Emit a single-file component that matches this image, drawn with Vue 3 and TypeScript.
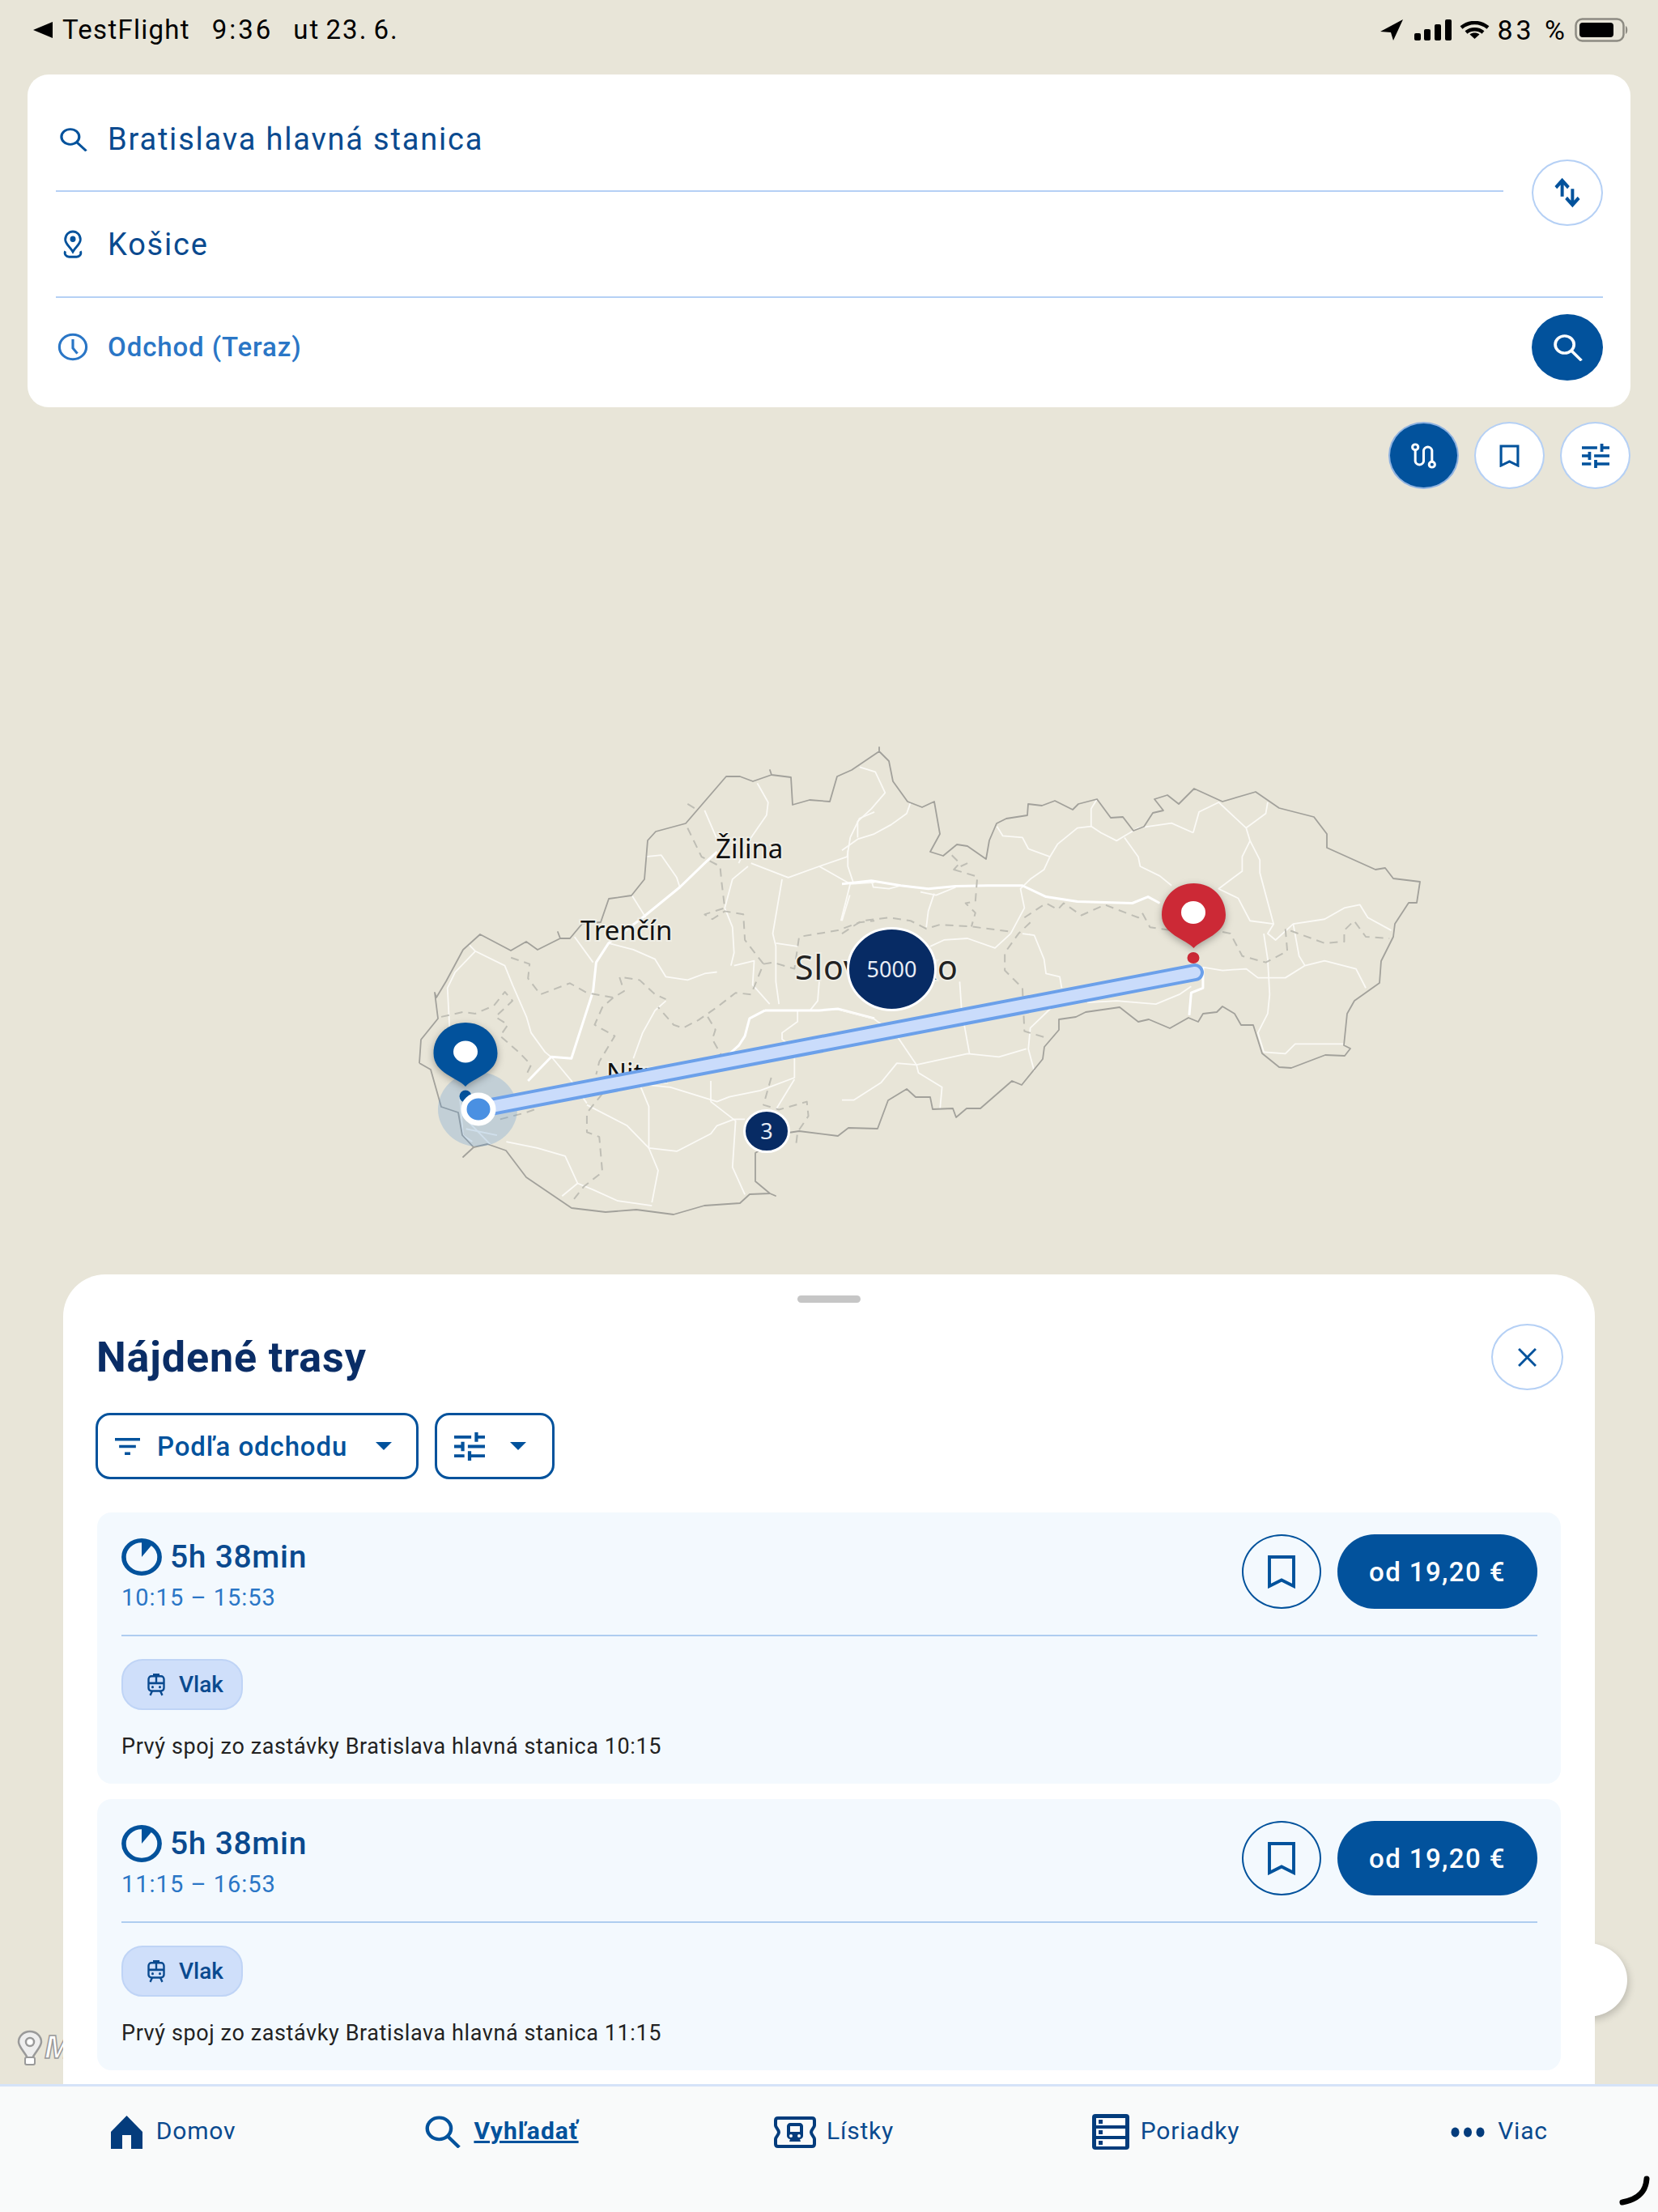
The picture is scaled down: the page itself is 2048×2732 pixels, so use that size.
<script setup lang="ts">
// map geometry is traced from the screenshot, west and east halves in their own grids
const border =
  '518,1313 520,1284 541,1258 537,1226 539,1232 551,1212 572,1173 593,1154 631,1174 650,1163 664,1173 692,1159 689,1151 692,1159 704,1159 719,1141 742,1139 752,1110 780,1106 796,1086 800,1038 810,1027 847,1017 897,959 914,959 930,965 953,957 951,951 953,957 977,960 979,994 1000,988 1025,990 1034,959 1052,951 1086,928 1086,923 1086,928 1098,940 1103,965 1121,990 1139,997 1154,990 1161,1030 1149,1052 1165,1057 1182,1043 1195,1045 1218,1061 1222,1038 1231,1017 1243,1011 1269,1007 1270,993 1287,995 1303,989 1325,1000 1332,993 1355,987 1372,1010 1387,1009 1400,1026 1413,1021 1424,1004 1437,1001 1426,987 1442,982 1456,993 1475,974 1510,990 1551,978 1580,998 1623,1009 1639,1030 1639,1047 1699,1074 1711,1072 1721,1085 1754,1089 1750,1115 1740,1115 1723,1141 1721,1157 1706,1187 1704,1214 1673,1236 1664,1252 1660,1291 1668,1295 1661,1304 1637,1303 1595,1319 1580,1318 1559,1301 1548,1266 1533,1266 1525,1252 1510,1243 1503,1250 1486,1252 1480,1262 1468,1257 1445,1270 1419,1259 1406,1262 1383,1244 1341,1250 1329,1256 1308,1259 1308,1272 1290,1293 1288,1308 1262,1340 1250,1335 1211,1369 1194,1369 1181,1380 1177,1369 1152,1370 1149,1355 1131,1355 1120,1345 1097,1359 1084,1394 1048,1393 1035,1403 987,1397 974,1399 933,1424 933,1459 951,1474 958,1477 951,1474 926,1475 914,1486 870,1489 832,1500 786,1494 748,1497 706,1492 650,1454 625,1421 602,1413 585,1417 572,1429 585,1417 571,1402 566,1374 545,1367 532,1321 518,1313'

const westRoads = [
  '260,675 280,695 375,740 400,800 445,900 460,950 505,1010 530,1030 590,1100 640,1170',
  '280,695 215,760 190,810 195,900 200,1000',
  '600,650 660,730',
  '785,520 830,590',
  '710,670 790,690 860,720 895,775 965,785 1020,765 1060,760',
  '830,400 880,395 930,465 940,495',
  '1170,420 1290,465 1390,430 1490,485 1568,480',
  '1020,255 1060,345',
  '1190,170 1225,230 1220,270 1170,340 1130,420',
  '1160,430 1110,470 1085,560 1110,620 1115,700 1105,740',
  '1270,470 1240,640 1250,680 1250,790 1260,860',
  '1250,670 1320,680',
  '1115,740 1180,725 1175,800 1230,860',
  '1390,430 1480,400 1490,340 1520,280 1568,260',
  '1490,485 1460,600',
  '895,850 860,880 820,950 790,1030',
  '1390,790 1385,850 1360,880',
  '1320,880 1320,915 1270,950 1270,970 1310,1000 1310,1090 1200,1130 1100,1150 1060,1165 910,1120 810,1110 840,1180 840,1310 930,1320 1040,1265 1060,1240 1115,1220 1150,1220',
  '840,1310 870,1380 850,1480',
  '1040,1165 1120,1225 1110,1370 1150,1455',
  '640,1175 770,1240 840,1310',
  '380,1290 480,1310 570,1335 610,1420 660,1440 740,1475 850,1490',
  '610,1420 560,1460',
  '1310,1095 1250,1190',
  '1040,1100 1040,1165',
  '230,1150 240,1270 270,1290',
  '250,1250 350,1270',
  '260,1230 330,1300',
]
const westHighways = [
  '450,1100 525,1025 590,1030 610,970 660,820 670,730 710,670 820,590 940,495 1020,420 1060,385',
  '1215,880 1320,880 1390,880 1450,875 1568,905',
  '1215,880 1165,905 1150,960 1130,990 1095,1020',
]
const westDashes = [
  '395,715 455,735 450,780 490,830 585,795 640,825 725,840 760,820 745,775 810,785 860,830 895,845',
  '725,840 690,870 665,925 730,960 680,1040 670,1080',
  '170,900 240,885 280,890 340,865 375,822 400,850 345,900 385,925 360,960 420,1010 460,1050 440,1090',
  '965,235 990,250',
  '965,310 1010,400 1070,430 1075,480 1085,560 1020,580 1045,595 1085,570 1145,580 1150,660 1210,735 1170,830 1120,825 1060,870 1000,910 950,935 920,925 870,870',
  '1030,900 1055,940 1045,970 1080,1030',
  '1210,735 1240,730 1310,750 1325,650 1450,630 1520,605 1568,600',
  '1235,1090 1210,1175 1260,1190 1350,1165 1355,1210 1320,1260 1315,1300',
  '690,1140 640,1200 640,1260 680,1275 690,1385 630,1430 590,1480',
  '360,1220 440,1200 470,1190',
]

const eastRoads = [
  '75,475 80,495 120,500 150,490',
  '200,510 240,520 290,495',
  '0,380 40,345 80,330 125,300 165,265 175,230',
  '45,120 85,135 110,200 75,250 40,290 40,340',
  '15,380 15,430 30,485',
  '0,600 20,520',
  '235,515 220,570 215,620',
  '225,680 260,660 320,655 390,685 430,640',
  '395,305 410,335 460,340 475,375 530,400 515,440 480,470 455,500 465,560 430,640',
  '530,400 550,360 600,310 635,305 660,325 700,350 720,335 755,310 840,295 895,325',
  '635,305 635,250 650,220',
  '720,340 755,400 760,430 810,460 840,490',
  '895,325 910,260 960,230 1030,310 1040,350 1020,400 1020,445 960,500 1010,530 1040,600 1100,610 1085,640 1105,660 1150,610 1230,595 1280,560 1320,550 1340,590 1400,630',
  '1085,230 1080,265 1030,310',
  '1040,350 1065,410 1065,450 1100,610',
  '1075,640 1085,720 1090,830 1085,890 1060,950 1075,1010',
  '920,745 970,755 1030,750 1060,778 1130,778 1180,740 1230,725 1310,750 1335,810',
  '1150,610 1165,710 1180,740',
  '890,805 860,830 800,860 700,850 625,855',
  '460,640 490,645 515,720 520,765 555,775 560,810',
  '300,790 305,880 325,1015',
  '535,870 480,935 475,1000 490,1070',
  '470,1000 400,1025 320,1015 190,1050 140,1045 100,1105 30,1160 0,1160',
  '190,1050 195,1075 255,1120 250,1185',
  '140,960 190,1050',
  '0,880 80,905 140,960',
  '1075,1010 1130,1015 1155,985 1280,985',
]
const eastHighways = [
  '0,485 75,475 150,490 220,500 290,492 370,490 460,490 520,525 600,540 740,545 780,525 810,545',
  '920,745 920,810 890,825 885,895',
]
const eastDashes = [
  '0,640 50,600 120,590 175,600 215,625 250,612 330,618 435,635',
  '480,605 450,640 415,700 415,755 460,810 465,945 520,965',
  '465,590 520,545 550,565 565,545 610,583 670,550 755,590 765,575 785,620 840,630',
  '280,395 300,420 285,440 320,420',
  '285,440 345,462 340,540 315,545 340,575 330,618',
  '970,635 990,640 1020,710 1080,730 1135,695 1130,625 1230,670 1280,665 1280,630 1305,600 1335,650 1395,655',
]

const routes = [
  { id: 1, time: '10:15 – 15:53', first: 'Prvý spoj zo zastávky Bratislava hlavná stanica 10:15' },
  { id: 2, time: '11:15 – 16:53', first: 'Prvý spoj zo zastávky Bratislava hlavná stanica 11:15' },
]

const tunePath =
  'M3 17v2h6v-2H3zM3 5v2h10V5H3zm10 16v-2h8v-2h-8v-2h-2v6h2zM7 9v2H3v2h4v2h2V9H7zm14 4v-2H11v2h10zm-6-4h2V7h4V5h-4V3h-2v6z'
</script>

<template>
  <div class="screen">
    <!-- map canvas -->
    <svg class="map" viewBox="0 0 2048 2732">
      <g transform="translate(480 900) scale(0.3827 0.3954)">
        <polyline v-for="p in westRoads" :key="p" class="road" :points="p" />
        <polyline v-for="p in westHighways" :key="p" class="road wide" :points="p" />
        <polyline v-for="p in westDashes" :key="p" class="dash" :points="p" />
      </g>
      <g transform="translate(1040 900) scale(0.4847 0.3954)">
        <polyline v-for="p in eastRoads" :key="p" class="road" :points="p" />
        <polyline v-for="p in eastHighways" :key="p" class="road wide" :points="p" />
        <polyline v-for="p in eastDashes" :key="p" class="dash" :points="p" />
      </g>
      <polyline class="border" :points="border" />

      <text class="city" x="884" y="1060">Žilina</text>
      <text class="city" x="717" y="1161">Trenčín</text>
      <text class="city" x="749" y="1337">Nitra</text>
      <text class="city big" x="982" y="1210">Slovensko</text>

      <ellipse cx="590" cy="1370" rx="49" ry="46" fill="#4f8ed0" fill-opacity="0.25" />
      <line x1="591" y1="1370" x2="1476" y2="1201" stroke="#6ba0ea" stroke-width="22" stroke-linecap="round" />
      <line x1="591" y1="1370" x2="1476" y2="1201" stroke="#cadcfb" stroke-width="14" stroke-linecap="round" />

      <ellipse cx="575" cy="1354" rx="7.5" ry="7.5" fill="#02529c" />
      <path class="pin" fill="#02529c" d="M575 1342 C566 1331 535.5 1326 535.5 1301 C535.5 1279 553 1263 575 1263 C597 1263 614.5 1279 614.5 1301 C614.5 1326 584 1331 575 1342Z" />
      <ellipse cx="575" cy="1299" rx="15" ry="13.5" fill="#fff" />
      <ellipse cx="591" cy="1370" rx="18" ry="17" fill="#4a90e2" stroke="#fff" stroke-width="7" />

      <ellipse cx="1474" cy="1183" rx="7.5" ry="7" fill="#cc2936" />
      <path class="pin" fill="#cc2936" d="M1474.5 1171 C1465 1160 1435 1154 1435 1130 C1435 1108 1452 1091 1474.5 1091 C1497 1091 1514 1108 1514 1130 C1514 1154 1484 1160 1474.5 1171Z" />
      <ellipse cx="1474" cy="1127" rx="15" ry="14" fill="#fff" />

      <ellipse cx="1101.5" cy="1197" rx="54" ry="50.5" fill="#072b64" stroke="#fff" stroke-width="3" />
      <text class="count" x="1101.5" y="1207">5000</text>
      <ellipse cx="947" cy="1397" rx="27.5" ry="25.5" fill="#072b64" stroke="#fff" stroke-width="3" />
      <text class="count" x="947" y="1407">3</text>
    </svg>

    <!-- map attribution logo, runs under the sheet -->
    <div class="map-logo">
      <svg width="32" height="44" viewBox="0 0 32 44">
        <path d="M16 2C8 2 2 8 2 15c0 6 8 13 11 20h6c3-7 11-14 11-20 0-7-6-13-14-13z" fill="#eeeeee" stroke="#9a9a9a" stroke-width="2.5" />
        <circle cx="16" cy="15" r="5" fill="#fff" stroke="#9a9a9a" stroke-width="2.5" />
        <rect x="10" y="34" width="12" height="9" rx="2" fill="#fff" stroke="#9a9a9a" stroke-width="2" />
      </svg>
      <span class="logo-m">M</span>
    </div>

    <!-- round button peeking out behind the sheet -->
    <div class="peek"></div>

    <header class="status">
      <div class="status-left">
        <svg width="24" height="20" viewBox="0 0 24 20"><path d="M24 0v20L0 10z" fill="#000" /></svg>
        <span class="sb-app">TestFlight</span>
        <span class="sb-time">9:36</span>
        <span class="sb-date">ut 23. 6.</span>
      </div>
      <div class="status-right">
        <svg width="28" height="26" viewBox="0 0 28 26"><path d="M28 0L0 15l13 1 3 10z" fill="#000" /></svg>
        <svg class="sb-signal" width="46" height="26" viewBox="0 0 46 26">
          <rect x="0" y="17" width="8" height="9" rx="2" />
          <rect x="12" y="12" width="8" height="14" rx="2" />
          <rect x="25" y="6" width="8" height="20" rx="2" />
          <rect x="38" y="0" width="8" height="26" rx="2" />
        </svg>
        <svg class="sb-wifi" width="37" height="22" viewBox="0 0 37 22" fill="none" stroke="#000" stroke-width="4.5">
          <path d="M2 8c10-8 23-8 33 0" />
          <path d="M8 14c6-5 15-5 21 0" />
          <path d="M18.5 22l-6-5.5c3.5-2.6 8.500-2.600 12 0z" fill="#000" stroke="none" />
        </svg>
        <span class="sb-batt-text">83 %</span>
        <svg width="67" height="30" viewBox="0 0 67 30">
          <rect x="1.500" y="1.500" width="59" height="27" rx="8" fill="none" stroke="#8d8b82" stroke-width="2.500" />
          <rect x="6" y="6" width="42" height="18" rx="4" fill="#000" />
          <path d="M63 10c3 1 3 9 0 10z" fill="#8d8b82" />
        </svg>
      </div>
    </header>

    <section class="search-card">
      <div class="field field-from">
        <span class="field-icon">
          <svg width="35" height="30" viewBox="0 0 24 24" preserveAspectRatio="none" fill="none" stroke="#02529c" stroke-width="2.200">
            <circle cx="9.500" cy="9.500" r="7.500" /><path d="M15 15l8 8.500" />
          </svg>
        </span>
        <span class="field-text">Bratislava hlavná stanica</span>
      </div>
      <div class="field field-to">
        <span class="field-icon">
          <svg width="28" height="35" viewBox="0 0 24 28" preserveAspectRatio="none" fill="none" stroke="#02529c" stroke-width="2.400">
            <path d="M12 1.500a8 8 0 0 1 8 8c0 4.500-5 7-8 12-3-5-8-7.500-8-12a8 8 0 0 1 8-8z" />
            <circle cx="12" cy="9" r="1.800" fill="#02529c" />
            <path d="M4 21c-1.500 3 1 5.500 4 5.500h8c3 0 5.500-2.500 4-5.500" />
          </svg>
        </span>
        <span class="field-text">Košice</span>
      </div>
      <div class="field field-when">
        <span class="field-icon">
          <svg width="38" height="35" viewBox="0 0 24 24" preserveAspectRatio="none" fill="none" stroke="#2a76c6" stroke-width="2">
            <circle cx="12" cy="12" r="10.500" /><path d="M12 5.500V13l3.500 4.500" />
          </svg>
        </span>
        <span class="when-text">Odchod (Teraz)</span>
        <button class="round solid go">
          <svg width="37" height="34" viewBox="0 0 24 24" preserveAspectRatio="none" fill="none" stroke="#fff" stroke-width="2.400">
            <circle cx="9.500" cy="9.500" r="7.500" /><path d="M15 15l8 8.500" />
          </svg>
        </button>
      </div>
      <button class="round swap">
        <svg width="34" height="38" viewBox="0 0 24 24" preserveAspectRatio="none" fill="none" stroke="#02529c" stroke-width="2.800">
          <path d="M7.500 15V2.500M2 8l5.500-5.500L13 8M16.500 9v12.500M11 16l5.500 5.500L22 16" />
        </svg>
      </button>
    </section>

    <div class="map-tools">
      <button class="round solid outlined">
        <svg width="33" height="32" viewBox="0 0 24 24" preserveAspectRatio="none" fill="none" stroke="#fff" stroke-width="2.200">
          <circle cx="4.500" cy="4" r="2.600" />
          <path d="M4.500 6.600V17a3.800 3.800 0 0 0 7.500 0V7a3.800 3.800 0 0 1 7.500 0v10.400" />
          <circle cx="19.500" cy="20" r="2.600" />
        </svg>
      </button>
      <button class="round">
        <svg width="25" height="28" viewBox="0 0 24 28" preserveAspectRatio="none" fill="none" stroke="#02529c" stroke-width="3">
          <path d="M2 2h20v24l-10-5-10 5z" />
        </svg>
      </button>
      <button class="round">
        <svg width="34" height="30" viewBox="3 3 18 18" preserveAspectRatio="none" fill="#02529c"><path :d="tunePath" /></svg>
      </button>
    </div>

    <div class="spacer"></div>

    <section class="sheet">
      <div class="handle"></div>
      <div class="sheet-head">
        <h1 class="sheet-title">Nájdené trasy</h1>
        <button class="round close">
          <svg width="25" height="25" viewBox="0 0 24 24" fill="none" stroke="#02529c" stroke-width="2.800">
            <path d="M2 2l20 20M22 2L2 22" />
          </svg>
        </button>
      </div>

      <div class="sort-row">
        <button class="select select-sort">
          <svg width="31" height="21" viewBox="3 6 18 12" preserveAspectRatio="none" fill="#02529c"><path d="M10 18h4v-2h-4v2zM3 6v2h18V6H3zm3 7h12v-2H6v2z" /></svg>
          <span>Podľa odchodu</span>
          <svg class="caret" width="20" height="10" viewBox="7 10 10 5" preserveAspectRatio="none"><path d="M7 10l5 5 5-5z" fill="#02529c" /></svg>
        </button>
        <button class="select select-tune">
          <svg width="38" height="35" viewBox="3 3 18 18" preserveAspectRatio="none" fill="#02529c"><path :d="tunePath" /></svg>
          <svg class="caret" width="20" height="10" viewBox="7 10 10 5" preserveAspectRatio="none"><path d="M7 10l5 5 5-5z" fill="#02529c" /></svg>
        </button>
      </div>

      <article v-for="r in routes" :key="r.id" class="route">
        <div class="route-top">
          <div>
            <div class="duration">
              <svg width="50" height="46" viewBox="0 0 24 24" preserveAspectRatio="none">
                <circle cx="12" cy="12" r="10.600" fill="none" stroke="#02529c" stroke-width="2.700" />
                <path d="M12 12V1.500A10.500 10.500 0 0 1 18.500 3.700z" fill="#02529c" />
              </svg>
              <span>5h 38min</span>
            </div>
            <div class="time">{{ r.time }}</div>
          </div>
          <div class="route-actions">
            <button class="round save">
              <svg width="36" height="42" viewBox="0 0 24 28" preserveAspectRatio="none" fill="none" stroke="#02529c" stroke-width="2.600">
                <path d="M2 2h20v24l-10-5-10 5z" />
              </svg>
            </button>
            <button class="price">od 19,20 €</button>
          </div>
        </div>
        <div class="mode">
          <svg width="24" height="28" viewBox="0 0 24 26" preserveAspectRatio="none" fill="none" stroke="#0a4a8f" stroke-width="2.400">
            <rect x="2.500" y="3" width="19" height="17" rx="3.500" />
            <path d="M2.500 11h19M12 3v8M8 1h8M7 20l-2.500 5M17 20l2.500 5" />
            <circle cx="7.500" cy="15.500" r="1.500" fill="#0a4a8f" stroke="none" />
            <circle cx="16.500" cy="15.500" r="1.500" fill="#0a4a8f" stroke="none" />
          </svg>
          <span>Vlak</span>
        </div>
        <p class="first">{{ r.first }}</p>
      </article>
    </section>

    <nav class="tabs">
      <a class="tab">
        <svg width="39" height="41" viewBox="0 0 39 41"><path d="M19.500 0L39 20v21H25V24H14v17H0V20z" fill="#043c7c" /></svg>
        <span>Domov</span>
      </a>
      <a class="tab active">
        <svg width="44" height="40" viewBox="0 0 24 24" preserveAspectRatio="none" fill="none" stroke="#02529c" stroke-width="2.400">
          <circle cx="9.500" cy="9.500" r="8" /><path d="M15.500 15.500l7.500 8" />
        </svg>
        <span>Vyhľadať</span>
      </a>
      <a class="tab">
        <svg width="52" height="39" viewBox="0 0 52 39">
          <path d="M5 2h42c2 0 3 1 3 3v6c0 3-4 5-4 8.500s4 5.500 4 8.500v6c0 2-1 3-3 3H5c-2 0-3-1-3-3v-6c0-3 4-5 4-8.500S2 14 2 11V5c0-2 1-3 3-3z" fill="none" stroke="#043c7c" stroke-width="4" stroke-linejoin="round" />
          <path d="M20 8h12c2 0 4 2 4 4v12c0 2-2 4-4 4l1 3H19l1-3c-2 0-4-2-4-4V12c0-2 2-4 4-4zm0 4v7h12v-7zm1 10a2 2 0 1 0 0 4 2 2 0 0 0 0-4zm10 0a2 2 0 1 0 0 4 2 2 0 0 0 0-4z" fill="#043c7c" fill-rule="evenodd" />
        </svg>
        <span>Lístky</span>
      </a>
      <a class="tab">
        <svg width="46" height="44" viewBox="0 0 46 44">
          <rect width="46" height="44" rx="4" fill="#043c7c" />
          <rect x="5" y="5" width="36" height="9" fill="#fff" />
          <rect x="5" y="18" width="36" height="9" fill="#fff" />
          <rect x="5" y="31" width="36" height="9" fill="#fff" />
          <rect x="8" y="7" width="5" height="5" fill="#043c7c" />
          <rect x="8" y="20" width="5" height="5" fill="#043c7c" />
          <rect x="8" y="33" width="5" height="5" fill="#043c7c" />
        </svg>
        <span>Poriadky</span>
      </a>
      <a class="tab">
        <svg width="42" height="13" viewBox="0 0 42 13" fill="#043c7c">
          <ellipse cx="5.500" cy="6.500" rx="5" ry="6" /><ellipse cx="21" cy="6.500" rx="5" ry="6" /><ellipse cx="36.500" cy="6.500" rx="5" ry="6" />
        </svg>
        <span>Viac</span>
      </a>
      <svg class="swoosh" width="40" height="38" viewBox="0 0 40 38">
        <path d="M35 4c-1 14-8 25-30 29" fill="none" stroke="#000" stroke-width="7" stroke-linecap="round" />
      </svg>
    </nav>
  </div>
</template>

<style scoped>
.screen {
  position: relative;
  display: flex;
  flex-direction: column;
  width: 2048px;
  height: 2732px;
  overflow: hidden;
  background: #e8e5d8;
  font-family: Roboto, "Noto Sans", sans-serif;
  color: #02529c;
}

button {
  font-family: inherit;
  cursor: pointer;
}

.map {
  position: absolute;
  inset: 0;
  width: 2048px;
  height: 2732px;
}

.map polyline {
  fill: none;
  stroke-linejoin: round;
  vector-effect: non-scaling-stroke;
}

.road {
  stroke: #fbfaf6;
  stroke-width: 1.8;
}

.road.wide {
  stroke: #fff;
  stroke-width: 3;
}

.dash {
  stroke: #bfbeb5;
  stroke-width: 2;
  stroke-dasharray: 10 7;
}

.border {
  stroke: #a2a19b;
  stroke-width: 1.8;
}

.city {
  font-family: "Noto Sans", sans-serif;
  font-size: 33px;
  fill: #111;
  stroke: #efeee6;
  stroke-width: 4px;
  paint-order: stroke;
}

.city.big {
  font-size: 41px;
  letter-spacing: 1px;
  fill: #222;
}

.count {
  font-family: "Noto Sans", sans-serif;
  font-size: 27px;
  text-anchor: middle;
  fill: #e8edf5;
}

.pin {
  filter: drop-shadow(0 3px 5px rgba(0, 0, 0, 0.3));
}

.map-logo {
  position: absolute;
  left: 21px;
  top: 2506px;
  display: flex;
  align-items: center;
  gap: 2px;
}

.logo-m {
  font-family: "Liberation Sans", sans-serif;
  font-size: 40px;
  font-weight: 700;
  font-style: italic;
  color: #fff;
  -webkit-text-stroke: 1.5px #9a9a9a;
}

.peek {
  position: absolute;
  left: 1912px;
  top: 2400px;
  width: 98px;
  height: 91px;
  border-radius: 50%;
  background: #fff;
  box-shadow: 2px 4px 10px rgba(0, 0, 0, 0.18);
}

.status {
  position: relative;
  display: flex;
  justify-content: space-between;
  height: 92px;
  padding: 0 36px 0 41px;
  box-sizing: border-box;
  color: #000;
  font-size: 33px;
  line-height: 74px;
  letter-spacing: 1.25px;
}

.status-left,
.status-right {
  display: flex;
  align-items: center;
  height: 74px;
}

.sb-app {
  margin-left: 12px;
}

.sb-time {
  margin-left: 27px;
  letter-spacing: 3px;
}

.sb-date {
  margin-left: 25px;
  letter-spacing: 2px;
  word-spacing: -3px;
}

.sb-signal {
  margin-left: 14px;
  fill: #000;
}

.sb-wifi {
  margin-left: 10px;
}

.sb-batt-text {
  margin: 0 8px 0 9px;
  letter-spacing: 4px;
  font-size: 34px;
}

.search-card {
  position: relative;
  margin: 0 34px;
  height: 411px;
  border-radius: 26px;
  background: #fff;
  box-sizing: border-box;
  padding: 0 34px 0 35px;
}

.field {
  display: flex;
  align-items: center;
  box-sizing: border-box;
}

.field-from {
  height: 145px;
  margin-right: 123px;
  padding-top: 16px;
  border-bottom: 2px solid #b5d0f5;
}

.field-to {
  height: 131px;
  border-bottom: 2px solid #b5d0f5;
}

.field-when {
  height: 135px;
  padding-bottom: 14px;
  justify-content: flex-start;
}

.field-icon {
  display: flex;
  justify-content: center;
  width: 42px;
  margin: 0 22px 0 0;
}

.field-text {
  font-size: 38px;
  letter-spacing: 1.8px;
  color: #0a4a8f;
}

.when-text {
  font-size: 33px;
  font-weight: 500;
  letter-spacing: 0.9px;
  color: #2a76c6;
}

.round {
  display: flex;
  align-items: center;
  justify-content: center;
  box-sizing: border-box;
  width: 87px;
  height: 83px;
  padding: 0;
  border: 2.5px solid #b5d0f5;
  border-radius: 50%;
  background: #fff;
}

.round.solid {
  background: #02529c;
  border-color: #02529c;
}

.round.outlined {
  border-color: #8fb2e0;
}

.swap {
  position: absolute;
  top: 105px;
  right: 34px;
  width: 88px;
  height: 82px;
}

.go {
  width: 88px;
  height: 82px;
  margin-left: auto;
}

.map-tools {
  position: relative;
  display: flex;
  justify-content: flex-end;
  gap: 19px;
  margin: 18px 34px 0 0;
}

.spacer {
  flex: 1;
}

.sheet {
  position: relative;
  z-index: 2;
  box-sizing: border-box;
  height: 1000px;
  margin: 0 78px;
  padding: 26px 42px 0;
  border-radius: 52px 52px 0 0;
  background: #fff;
  overflow: hidden;
}

.handle {
  width: 78px;
  height: 9px;
  margin: 0 auto;
  border-radius: 5px;
  background: #c6c6c6;
}

.sheet-head {
  display: flex;
  align-items: center;
  justify-content: space-between;
  margin-top: 26px;
}

.sheet-title {
  margin: 0 0 0 -1px;
  font-size: 52px;
  font-weight: 700;
  letter-spacing: 0.9px;
  color: #0a2d66;
}

.close {
  width: 89px;
  height: 82px;
  margin-right: -3px;
}

.sort-row {
  display: flex;
  gap: 20px;
  margin: 28px 0 41px -2px;
}

.select {
  display: flex;
  align-items: center;
  box-sizing: border-box;
  height: 82px;
  padding: 0;
  border: 3px solid #02529c;
  border-radius: 18px;
  background: #fff;
  color: #02529c;
  font-size: 33px;
  font-weight: 500;
  letter-spacing: 0.9px;
}

.select-sort {
  width: 399px;
  padding-left: 21px;
  gap: 21px;
}

.select-sort .caret {
  margin-left: auto;
  margin-right: 30px;
}

.select-tune {
  width: 148px;
  padding-left: 21px;
  gap: 31px;
}

.route {
  box-sizing: border-box;
  height: 335px;
  margin-bottom: 19px;
  padding: 27px 29px 0 30px;
  border-radius: 18px;
  background: #f3f9fe;
}

.route-top {
  display: flex;
  justify-content: space-between;
  box-sizing: border-box;
  height: 126px;
  padding-bottom: 32px;
  border-bottom: 2px solid #aecdf0;
}

.duration {
  display: flex;
  align-items: center;
  gap: 10px;
  height: 46px;
  margin-top: 5px;
  font-size: 39px;
  font-weight: 500;
  letter-spacing: 0.7px;
  color: #0a4a8f;
}

.time {
  margin-top: 9px;
  font-size: 29px;
  line-height: 36px;
  letter-spacing: 1px;
  color: #2a76c6;
}

.route-actions {
  display: flex;
  gap: 20px;
}

.save {
  width: 98px;
  height: 92px;
  border-color: #02529c;
  background: transparent;
}

.price {
  width: 247px;
  height: 92px;
  padding: 0;
  border: 0;
  border-radius: 46px;
  background: #02529c;
  color: #fff;
  font-size: 33px;
  font-weight: 500;
  letter-spacing: 1.4px;
}

.mode {
  display: flex;
  align-items: center;
  box-sizing: border-box;
  gap: 16px;
  width: 150px;
  height: 63px;
  margin-top: 28px;
  padding-left: 29px;
  border: 2px solid #bfd4f6;
  border-radius: 26px;
  background: #cfdffa;
  font-size: 28px;
  font-weight: 500;
  color: #0a4a8f;
}

.first {
  margin: 28px 0 0;
  font-size: 27px;
  line-height: 34px;
  letter-spacing: 0.6px;
  color: #222;
}

.tabs {
  position: relative;
  z-index: 3;
  display: grid;
  grid-template-columns: repeat(5, 410px);
  box-sizing: border-box;
  height: 158px;
  padding: 33px 0 0 5px;
  border-top: 3px solid #d5e3f8;
  background: #f9fafa;
}

.tab {
  display: flex;
  align-items: center;
  justify-content: center;
  gap: 16px;
  height: 46px;
  font-size: 30px;
  letter-spacing: 0.8px;
  color: #0a4a8f;
}

.tab:nth-child(1) {
  gap: 17px;
  padding-left: 8px;
}

.tab:nth-child(3) {
  gap: 13px;
}

.tab:nth-child(4) {
  gap: 14px;
}

.tab:nth-child(5) {
  padding-left: 4px;
}

.tab span {
  margin-top: -3px;
}

.tab.active {
  font-weight: 700;
  letter-spacing: 1px;
  color: #02529c;
}

.tab.active span {
  text-decoration: underline;
}

.swoosh {
  position: absolute;
  left: 1999px;
  top: 110px;
}
</style>
